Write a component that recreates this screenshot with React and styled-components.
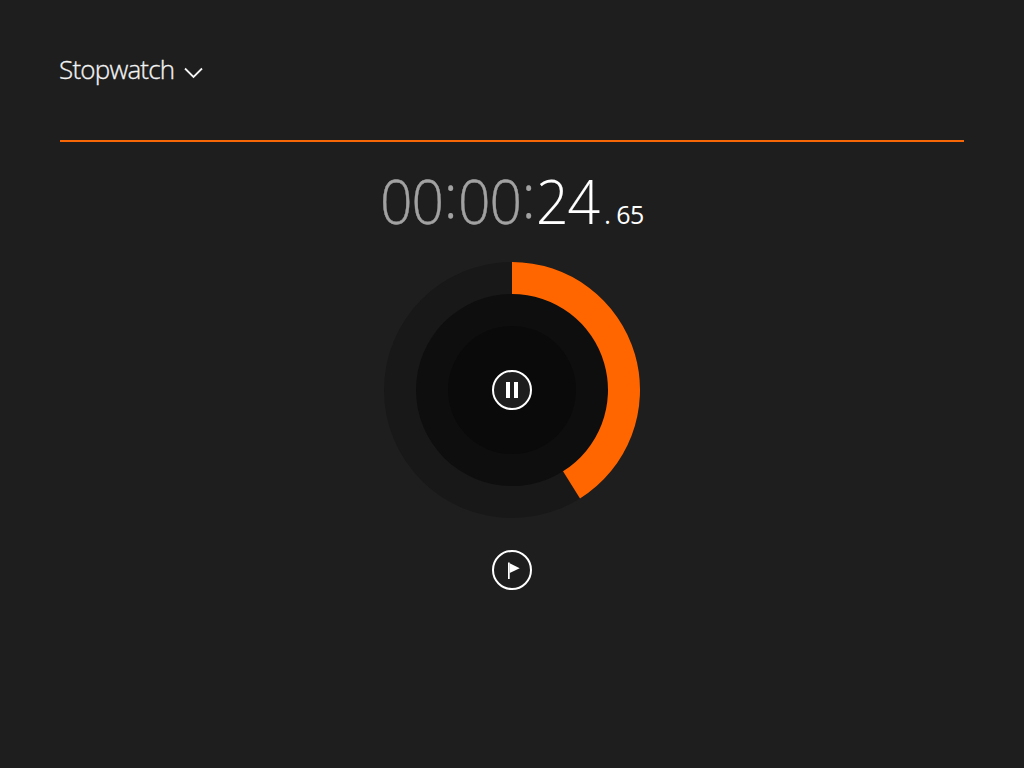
import React from 'react'
import styled, { createGlobalStyle } from 'styled-components'

const GlobalStyle = createGlobalStyle`
  * {
    box-sizing: border-box;
  }
  body {
    margin: 0;
    background: #1e1e1e;
    color: #fff;
    font-family: 'Open Sans', 'Noto Sans', sans-serif;
    font-weight: 300;
  }
`

const Page = styled.main`
  height: 100vh;
  padding: 0 60px;
  display: flex;
  flex-direction: column;
`

const Header = styled.header`
  height: 142px;
  padding-top: 51px;
  border-bottom: 2px solid #f86707;
`

const ModeButton = styled.button`
  display: flex;
  align-items: center;
  gap: 10px;
  height: 36px;
  margin-left: -1px;
  padding: 0;
  border: 0;
  background: none;
  color: #f4f4f4;
  font: inherit;
  font-size: 26px;
  line-height: 36px;
  letter-spacing: -0.8px;
  -webkit-text-stroke: 0.3px;
`

const Chevron = styled.svg`
  display: block;
  margin-top: 7px;
`

const Readout = styled.div`
  height: 120px;
  padding-top: 17px;
  display: flex;
  justify-content: center;
  align-items: baseline;
  line-height: 84px;
`

const Digits = styled.span`
  width: 63px;
  font-size: 60px;
  letter-spacing: -1.2px;
  transform: scaleX(0.95);
  transform-origin: left;
  -webkit-text-stroke: ${(props) => (props.$dim ? '0.4px' : '0.1px')};
  color: ${(props) => (props.$dim ? '#a2a2a2' : '#fff')};
`

const Colon = styled.span`
  position: relative;
  top: -6px;
  width: 15px;
  font-size: 60px;
  text-align: center;
  -webkit-text-stroke: 0.3px;
  color: #a2a2a2;
`

const Fraction = styled.span`
  margin-left: 5px;
  font-size: 25px;
  font-weight: 400;
  letter-spacing: -0.5px;
`

const Controls = styled.div`
  display: flex;
  flex-direction: column;
  align-items: center;
  gap: 32px;
`

const Dial = styled.div`
  display: grid;
  place-items: center;
  width: 256px;
  height: 256px;

  > * {
    grid-area: 1 / 1;
  }
`

const RoundButton = styled.button`
  display: flex;
  justify-content: center;
  align-items: center;
  width: 40px;
  height: 40px;
  padding: 0;
  border: 2px solid #fff;
  border-radius: 50%;
  background: #1e1e1e;
`

const SIZE = 256
const RING = 32

function Progress({ seconds }) {
  const c = SIZE / 2
  const inner = c - RING
  const angle = (seconds / 60) * 2 * Math.PI
  const point = (r) => `${c + r * Math.sin(angle)} ${c - r * Math.cos(angle)}`
  const large = angle > Math.PI ? 1 : 0
  return (
    <svg width={SIZE} height={SIZE}>
      <circle cx={c} cy={c} r={c} fill="#181818" />
      <circle cx={c} cy={c} r={inner} fill="#0e0e0e" />
      <circle cx={c} cy={c} r={inner - RING} fill="#0a0a0a" />
      <path
        d={`M${c} 0A${c} ${c} 0 ${large} 1 ${point(c)}L${point(inner)}A${inner} ${inner} 0 ${large} 0 ${c} ${RING}Z`}
        fill="#ff6600"
      />
    </svg>
  )
}

function App() {
  return (
    <Page>
      <GlobalStyle />
      <Header>
        <ModeButton>
          Stopwatch
          <Chevron width="19" height="12" fill="none" stroke="#f4f4f4" strokeWidth="1.8">
            <path d="M1 1.5L9.5 10L18 1.5" />
          </Chevron>
        </ModeButton>
      </Header>
      <Readout>
        <Digits $dim>00</Digits>
        <Colon>:</Colon>
        <Digits $dim>00</Digits>
        <Colon>:</Colon>
        <Digits>24</Digits>
        <Fraction>. 65</Fraction>
      </Readout>
      <Controls>
        <Dial>
          <Progress seconds={24.65} />
          <RoundButton aria-label="Pause">
            <svg width="12" height="16" fill="#fff">
              <rect width="4" height="16" />
              <rect x="8" width="4" height="16" />
            </svg>
          </RoundButton>
        </Dial>
        <RoundButton aria-label="Lap">
          <svg width="36" height="36" fill="#fff">
            <path d="M14 10.5H15.7V27H14Z" />
            <path d="M15.7 11.3L25.7 16.2L15.7 21Z" />
          </svg>
        </RoundButton>
      </Controls>
    </Page>
  )
}

export default App
